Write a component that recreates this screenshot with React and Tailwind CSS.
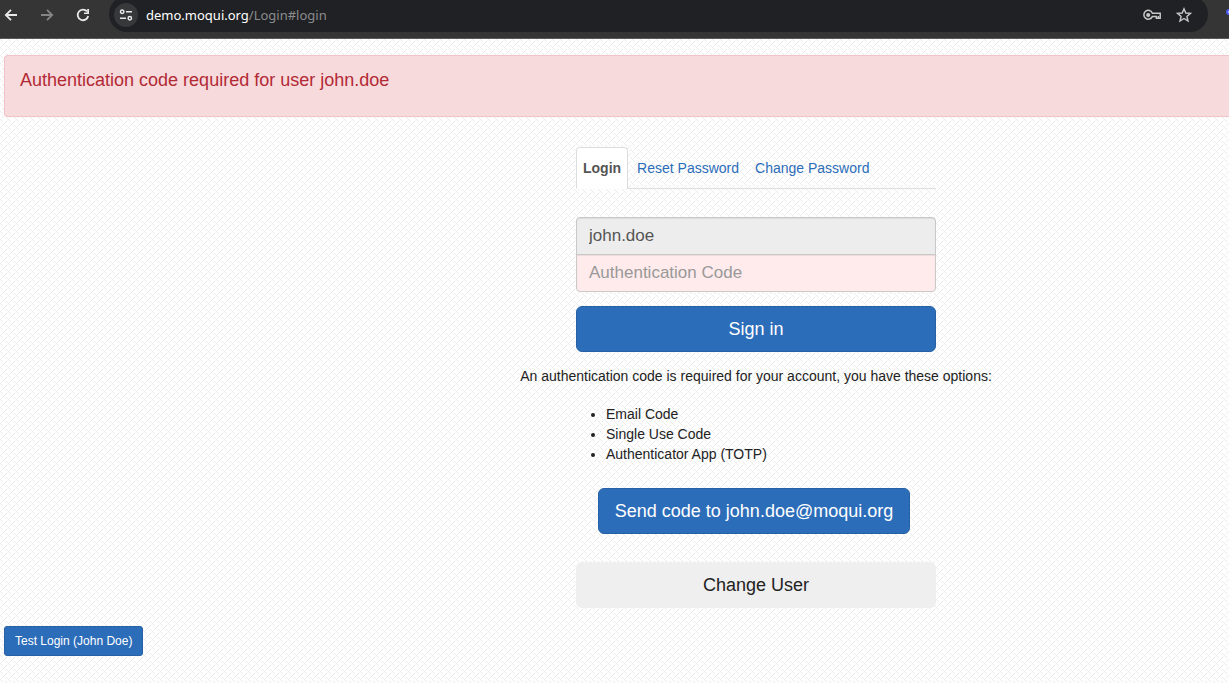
import React from "react";

const tabs = ["Login", "Reset Password", "Change Password"];
const options = ["Email Code", "Single Use Code", "Authenticator App (TOTP)"];

function BrowserBar() {
  return (
    <header className="relative flex h-[39px] items-start overflow-hidden border-b border-[#5a5a5a] bg-[#353535] text-white">
      <nav className="flex h-[30px] items-center gap-5 pl-[3px]">
        <button type="button" aria-label="Back">
          <svg width="16" height="16" viewBox="0 0 16 16" fill="none" stroke="#e8e8e8" strokeWidth="1.8">
            <path d="M14 8H3M8 2.8L2.8 8L8 13.2" />
          </svg>
        </button>
        <button type="button" aria-label="Forward">
          <svg width="16" height="16" viewBox="0 0 16 16" fill="none" stroke="#858585" strokeWidth="1.8">
            <path d="M2 8H13M8 2.8L13.2 8L8 13.2" />
          </svg>
        </button>
        <button type="button" aria-label="Reload">
          <svg width="16" height="16" viewBox="0 0 16 16" fill="none" stroke="#e8e8e8" strokeWidth="1.8">
            <path d="M13.2 9A5.3 5.3 0 1 1 12 4.4" />
            <path d="M14 2V7H9V5.4H12.2V2Z" fill="#e8e8e8" stroke="none" />
          </svg>
        </button>
      </nav>
      <div className="-mt-1 ml-[18px] mr-[21px] flex h-9 flex-1 items-center rounded-full bg-[#202124] pl-[5px] pr-4 pt-[2px]">
        <button type="button" aria-label="Site information" className="flex size-6 items-center justify-center rounded-full bg-[#37383a]">
          <svg width="14" height="14" viewBox="0 0 14 14" fill="none" stroke="#e8e8e8" strokeWidth="1.5">
            <circle cx="3.2" cy="3.8" r="1.7" />
            <circle cx="10.8" cy="10.2" r="1.7" />
            <path d="M7 3.8H13M1 10.2H7" />
          </svg>
        </button>
        <p className="ml-2 flex-1 font-['Noto_Sans',sans-serif] text-[13px]">
          demo.moqui.org<span className="text-[#8b8c8e]">/Login#login</span>
        </p>
        <div className="flex items-center gap-[15px]">
          <button type="button" aria-label="Passwords">
            <svg width="18" height="12" viewBox="0 0 18 12" fill="none" stroke="#c7c7c7" strokeWidth="1.5">
              <path d="M9.4 4.2H17.2V9.2H13.4V7.6H9.3A4.4 4.4 0 1 1 9.4 4.2Z" />
              <path d="M15.4 7V9" />
              <circle cx="5.2" cy="6" r="1.3" fill="#c7c7c7" />
            </svg>
          </button>
          <button type="button" aria-label="Bookmark">
            <svg width="16" height="16" viewBox="0 0 16 16" fill="none" stroke="#c7c7c7" strokeWidth="1.4">
              <path d="M8 1.8L9.8 6L14.4 6.4L10.9 9.4L12 14L8 11.5L4 14L5.1 9.4L1.6 6.4L6.2 6Z" />
            </svg>
          </button>
        </div>
      </div>
      <svg className="absolute right-0 top-2" width="3" height="12" viewBox="0 0 3 12" aria-hidden="true">
        <circle cx="3" cy="4" r="3" fill="#4a5cf0" />
        <path d="M2 4H3" stroke="#fff" />
      </svg>
    </header>
  );
}

// Diagonal strands that pass over and under each other at (0,0) and (4,4)
function Weave() {
  return (
    <svg className="absolute inset-0 -z-10 h-full w-full" aria-hidden="true" shapeRendering="crispEdges">
      <defs>
        <pattern id="weave" width="8" height="8" patternUnits="userSpaceOnUse">
          <path
            d="M0 0h1v1h-1zM1 1h1v1h-1zM2 2h1v1h-1zM6 6h1v1h-1zM7 7h1v1h-1zM2 6h1v1h-1zM3 5h1v1h-1zM4 4h1v1h-1zM5 3h1v1h-1zM6 2h1v1h-1z"
            fill="#ebebeb"
          />
        </pattern>
      </defs>
      <rect width="100%" height="100%" fill="#fefefe" />
      <rect width="100%" height="100%" fill="url(#weave)" />
    </svg>
  );
}

function Tabs() {
  return (
    <ul className="flex gap-0.5 border-b border-[#dddddd]">
      {tabs.map((tab, i) => (
        <li key={tab} className="-mb-px">
          <a
            href="#login"
            className={
              i === 0
                ? "block rounded-t border border-[#dddddd] border-b-white bg-white px-1.5 py-2.5 font-bold text-[#555555]"
                : "block border border-transparent px-1.5 py-2.5 text-[#2c6dba]"
            }
          >
            {tab}
          </a>
        </li>
      ))}
    </ul>
  );
}

export default function App() {
  return (
    <div className="flex min-h-screen flex-col font-['Liberation_Sans',sans-serif] text-sm leading-5 text-[#222222]">
      <BrowserBar />
      <main className="relative isolate flex-1 overflow-hidden pl-1 pt-4">
        <Weave />
        <div role="alert" className="rounded-l border border-r-0 border-[#f0c4c9] bg-[#f7dadc] px-[15px] pb-6 pt-3 text-lg leading-6 text-[#b22a35]">
          Authentication code required for user john.doe
        </div>

        <div className="flex flex-col items-center pl-[279px] pt-[30px]">
          <div className="w-full max-w-[360px]">
            <Tabs />
          </div>

          <form className="mt-7 w-full max-w-[360px]" onSubmit={(e) => e.preventDefault()}>
            <input
              type="text"
              aria-label="Username"
              defaultValue="john.doe"
              disabled
              className="block h-[38px] w-full rounded-t border border-[#c8c8c8] bg-[#ededed] px-3 text-[17px] text-[#555555] shadow-[inset_0_1px_1px_rgba(0,0,0,0.075)]"
            />
            <input
              type="text"
              aria-label="Authentication Code"
              placeholder="Authentication Code"
              className="-mt-px block h-[38px] w-full rounded-b border border-[#c8c8c8] bg-[#ffebeb] px-3 text-[17px] shadow-[inset_0_1px_1px_rgba(0,0,0,0.075)] placeholder:text-[#999999]"
            />
            <button type="submit" className="mt-3.5 h-[46px] w-full rounded-md border border-[#2761a5] bg-[#2c6dba] text-lg text-white">
              Sign in
            </button>
          </form>

          <p className="mt-3.5">An authentication code is required for your account, you have these options:</p>

          <ul className="mt-[18px] w-full max-w-[360px] list-disc pl-[30px]">
            {options.map((option) => (
              <li key={option}>{option}</li>
            ))}
          </ul>

          <button type="button" className="mr-1 mt-6 h-[46px] rounded-md border border-[#2761a5] bg-[#2c6dba] px-4 text-lg text-white">
            Send code to john.doe@moqui.org
          </button>
          <button type="button" className="mt-7 h-[46px] w-full max-w-[360px] rounded-md bg-[#efefef] text-lg">
            Change User
          </button>
        </div>

        <button type="button" className="mt-[18px] h-[30px] rounded-[3px] border border-[#2761a5] bg-[#2c6dba] px-2.5 text-xs text-white">
          Test Login (John Doe)
        </button>
      </main>
    </div>
  );
}
